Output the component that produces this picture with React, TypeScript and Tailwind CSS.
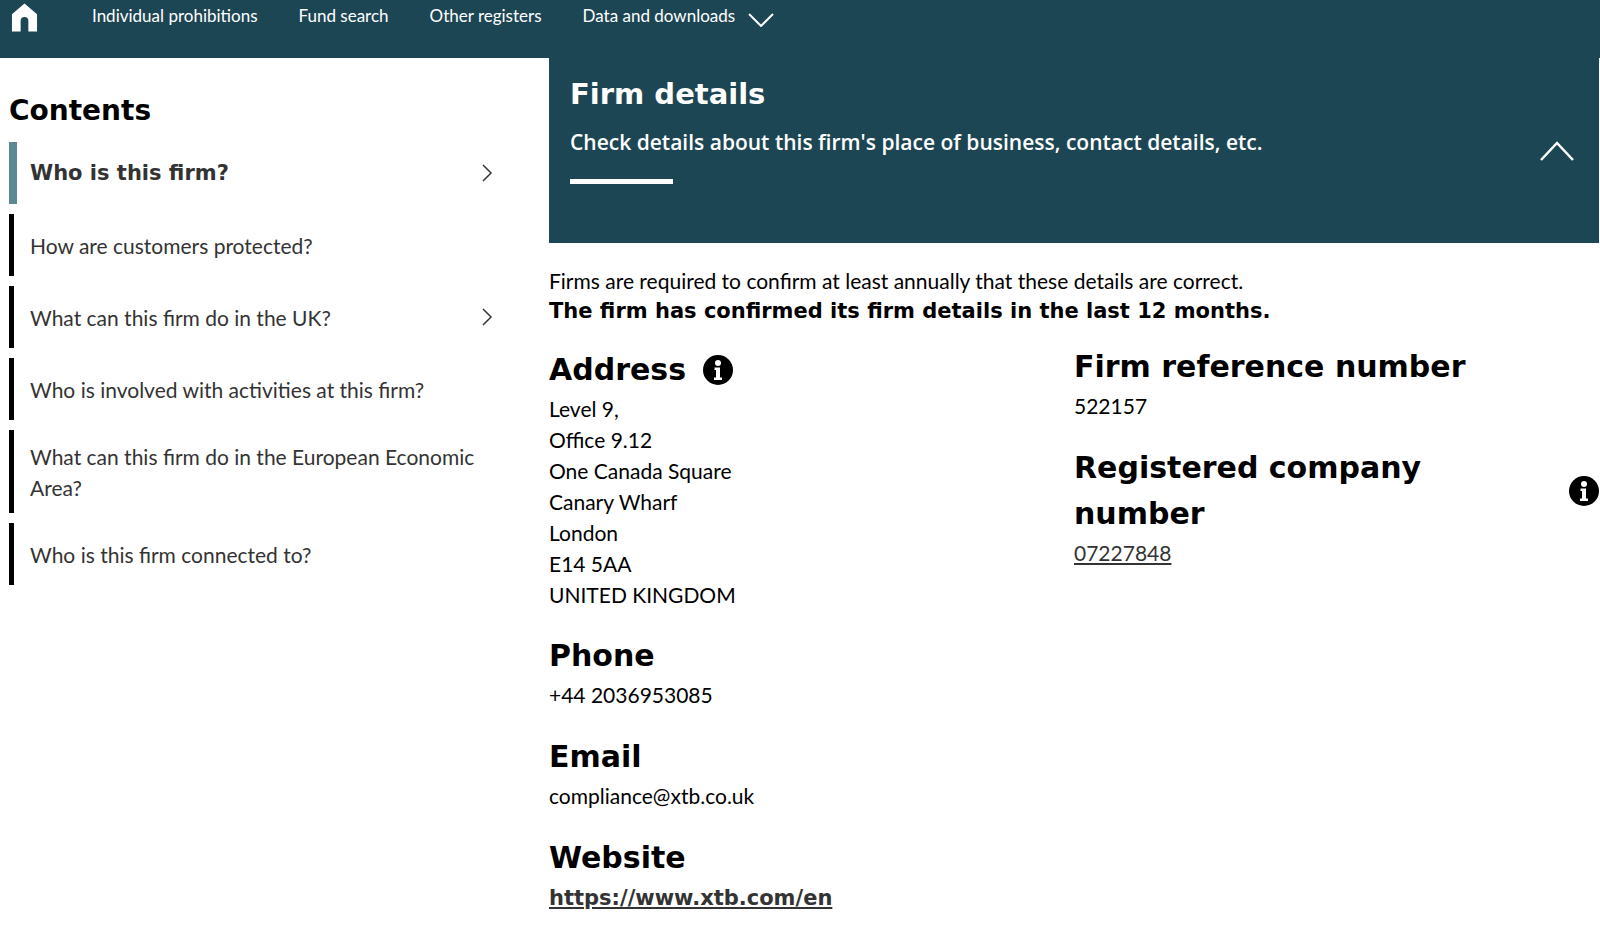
const lato = "font-['Lato',sans-serif]";
const dejavu = "font-['DejaVu_Sans',sans-serif] font-bold";

const items = [
  { label: 'Who is this firm?', active: true, arrow: true },
  { label: 'How are customers protected?' },
  { label: 'What can this firm do in the UK?', arrow: true },
  { label: 'Who is involved with activities at this firm?' },
  { label: 'What can this firm do in the European Economic Area?', tall: true },
  { label: 'Who is this firm connected to?' },
];

function InfoIcon() {
  return (
    <svg viewBox="0 0 30 30" className="w-[30px] h-[30px] shrink-0">
      <circle cx="15" cy="15" r="15" fill="#000" />
      <circle cx="15" cy="8" r="3" fill="#fff" />
      <path d="M11.5 12.5h5.5v10h2v2.5h-8v-2.5h2v-7.5h-1.500z" fill="#fff" />
    </svg>
  );
}

function Heading({ children }: { children: React.ReactNode }) {
  return <h3 className={`${dejavu} text-[30px] leading-[46px] text-black`}>{children}</h3>;
}

function NavBar() {
  return (
    <nav className={`${lato} h-[58px] bg-[#1d4654] flex items-start text-white text-[17px] leading-[32px] pl-[11px]`}>
      <svg viewBox="0 0 28 29" className="w-[27px] h-[29px] mt-[3px] mr-[54px]">
        <path d="M14 0 L27 11 V29 H18 V18 a4 4 0 0 0 -8 0 V29 H1 V11 Z" fill="#fff" />
      </svg>
      <a className="mr-[41px]">Individual prohibitions</a>
      <a className="mr-[41px]">Fund search</a>
      <a className="mr-[41px]">Other registers</a>
      <a>Data and downloads</a>
      <svg viewBox="0 0 26 14" className="w-[26px] h-[14px] ml-[13px] mt-[13px]" fill="none" stroke="#fff" strokeWidth="2">
        <path d="M1 1 L13 13 L25 1" />
      </svg>
    </nav>
  );
}

function Sidebar() {
  return (
    <aside className="w-[549px] shrink-0 pl-[9px] pr-[56px]">
      <h2 className={`${dejavu} text-[28px] leading-[40px] text-black mt-[33px] mb-[11px]`}>Contents</h2>
      <ul className="flex flex-col gap-[10px]">
        {items.map((item) => (
          <li
            key={item.label}
            className={`flex items-center justify-between ${item.tall ? 'h-[83px]' : 'h-[62px]'} border-l-[5px] ${item.active ? 'border-l-[8px] border-[#5d8791] pl-[13px]' : 'border-black pl-[16px]'} text-[#333]`}
          >
            <span className={`${item.active ? `${dejavu} text-[21px]` : `${lato} text-[21px]`} leading-[31px]`}>{item.label}</span>
            {item.arrow && (
              <svg viewBox="0 0 12 18" className="w-[12px] h-[18px] shrink-0" fill="none" stroke="#333" strokeWidth="1.500">
                <path d="M2 1 L10 9 L2 17" />
              </svg>
            )}
          </li>
        ))}
      </ul>
    </aside>
  );
}

export default function App() {
  return (
    <div className="w-[1600px] h-[935px] overflow-hidden bg-white">
      <NavBar />
      <div className="flex">
        <Sidebar />
        <main className={`${lato} w-[1050px] text-[21px] leading-[31px] text-black`}>
          {/* Banner */}
          <div className="h-[185px] bg-[#1d4654] text-white pl-[21px] pr-[25px] pt-[14px] flex items-center justify-between">
            <div className="self-start">
              <h1 className={`${dejavu} text-[29px] leading-[44px]`}>Firm details</h1>
              <p className="font-['Open_Sans',sans-serif] font-semibold text-[21px] leading-[31px] mt-[11px] w-[700px]">
                Check details about this firm's place of business, contact details, etc.
              </p>
              <div className="w-[103px] h-[5px] bg-white mt-[21px]" />
            </div>
            <svg viewBox="0 0 34 20" className="w-[34px] h-[20px] mb-[14px]" fill="none" stroke="#fff" strokeWidth="2.500">
              <path d="M1 19 L17 2 L33 19" />
            </svg>
          </div>

          <p className="mt-[22px]">Firms are required to confirm at least annually that these details are correct.</p>
          <p className={`${dejavu} text-[21px]`}>The firm has confirmed its firm details in the last 12 months.</p>

          <div className="flex mt-[17px]">
            <section className="w-[525px] shrink-0">
              <div className="flex items-center gap-[17px] mt-[3px]">
                <Heading>Address</Heading>
                <InfoIcon />
              </div>
              <address className="not-italic">
                Level 9,<br />Office 9.12<br />One Canada Square<br />Canary Wharf<br />London<br />E14 5AA<br />UNITED KINGDOM
              </address>
              <div className="mt-[23px]">
                <Heading>Phone</Heading>
                <p>+44 2036953085</p>
              </div>
              <div className="mt-[24px]">
                <Heading>Email</Heading>
                <p>compliance@xtb.co.uk</p>
              </div>
              <div className="mt-[24px]">
                <Heading>Website</Heading>
                <a className={`${dejavu} text-[#333] underline text-[21px]`}>https://www.xtb.com/en</a>
              </div>
            </section>
            <section className="flex-1">
              <Heading>Firm reference number</Heading>
              <p>522157</p>
              <div className="flex items-center justify-between mt-[24px]">
                <div className="w-[420px]">
                  <Heading>Registered company number</Heading>
                </div>
                <InfoIcon />
              </div>
              <a className="text-[#333] underline">07227848</a>
            </section>
          </div>
        </main>
      </div>
    </div>
  );
}
